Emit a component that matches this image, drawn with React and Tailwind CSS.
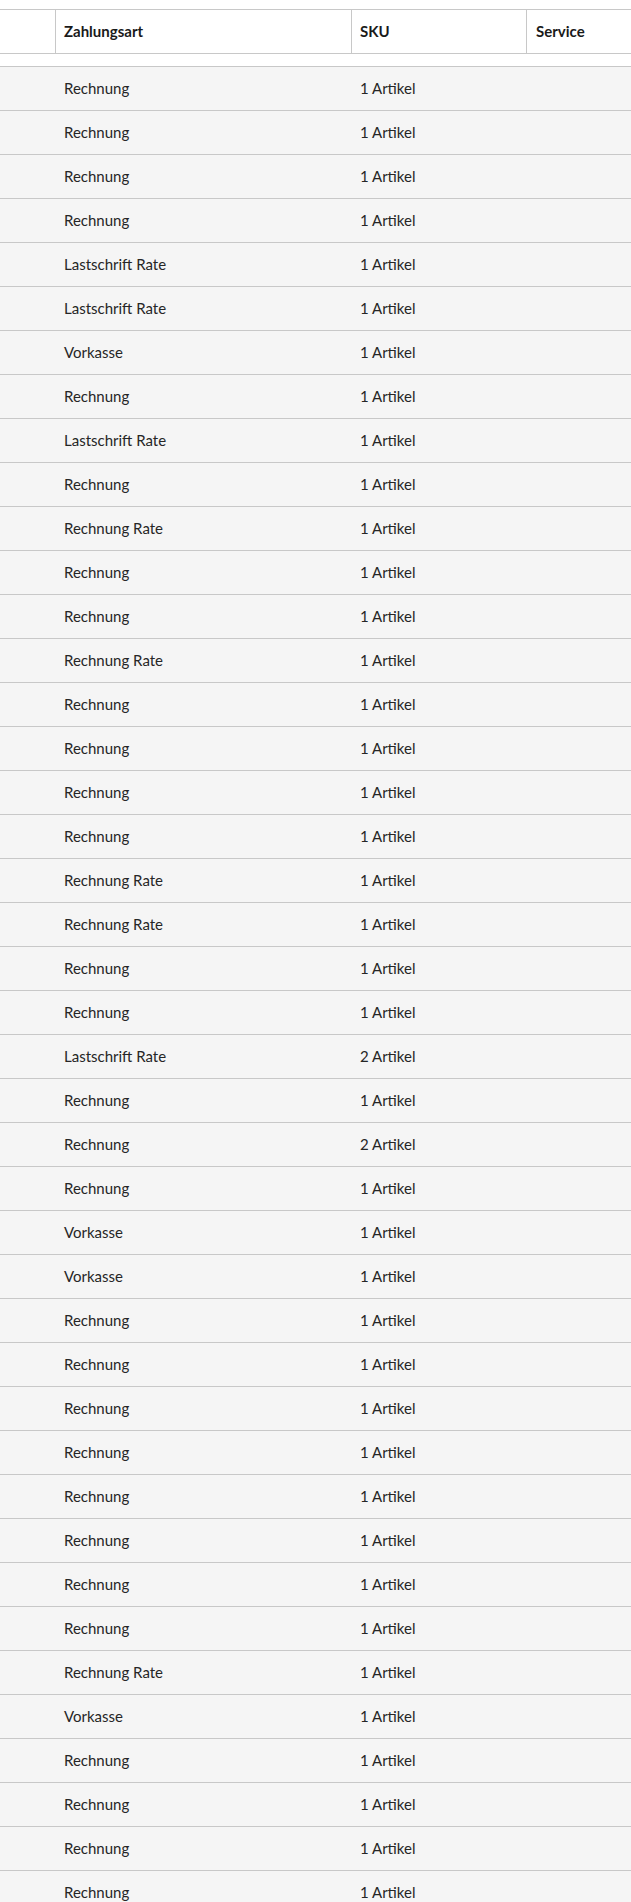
import React from 'react';

const rows = [
  ['Rechnung', '1 Artikel'],
  ['Rechnung', '1 Artikel'],
  ['Rechnung', '1 Artikel'],
  ['Rechnung', '1 Artikel'],
  ['Lastschrift Rate', '1 Artikel'],
  ['Lastschrift Rate', '1 Artikel'],
  ['Vorkasse', '1 Artikel'],
  ['Rechnung', '1 Artikel'],
  ['Lastschrift Rate', '1 Artikel'],
  ['Rechnung', '1 Artikel'],
  ['Rechnung Rate', '1 Artikel'],
  ['Rechnung', '1 Artikel'],
  ['Rechnung', '1 Artikel'],
  ['Rechnung Rate', '1 Artikel'],
  ['Rechnung', '1 Artikel'],
  ['Rechnung', '1 Artikel'],
  ['Rechnung', '1 Artikel'],
  ['Rechnung', '1 Artikel'],
  ['Rechnung Rate', '1 Artikel'],
  ['Rechnung Rate', '1 Artikel'],
  ['Rechnung', '1 Artikel'],
  ['Rechnung', '1 Artikel'],
  ['Lastschrift Rate', '2 Artikel'],
  ['Rechnung', '1 Artikel'],
  ['Rechnung', '2 Artikel'],
  ['Rechnung', '1 Artikel'],
  ['Vorkasse', '1 Artikel'],
  ['Vorkasse', '1 Artikel'],
  ['Rechnung', '1 Artikel'],
  ['Rechnung', '1 Artikel'],
  ['Rechnung', '1 Artikel'],
  ['Rechnung', '1 Artikel'],
  ['Rechnung', '1 Artikel'],
  ['Rechnung', '1 Artikel'],
  ['Rechnung', '1 Artikel'],
  ['Rechnung', '1 Artikel'],
  ['Rechnung Rate', '1 Artikel'],
  ['Vorkasse', '1 Artikel'],
  ['Rechnung', '1 Artikel'],
  ['Rechnung', '1 Artikel'],
  ['Rechnung', '1 Artikel'],
  ['Rechnung', '1 Artikel'],
];

const cols = 'grid grid-cols-[55px_296px_175px_1fr]';

export default function App() {
  return (
    <div className="bg-white pt-[9px] text-[15px] text-[#262626] font-['Lato','Liberation_Sans',sans-serif] min-h-[1902px] overflow-hidden">
      {/* header */}
      <div className={`${cols} border-y border-[#c8c8c8] h-[45px] font-bold text-[#1a1a1a]`}>
        <div />
        <div className="border-l border-[#c8c8c8] pl-2 flex items-center">Zahlungsart</div>
        <div className="border-l border-[#c8c8c8] pl-2 flex items-center">SKU</div>
        <div className="border-l border-[#c8c8c8] pl-[9px] flex items-center">Service</div>
      </div>

      <div className="h-3" />

      {/* body */}
      <div className="bg-[#f5f5f5]">
        {rows.map((row, i) => (
          <div key={i} className={`${cols} border-t border-[#c8c8c8] h-[44px] items-center`}>
            <div />
            <div className="pl-[9px]">{row[0]}</div>
            <div className="pl-[9px]">{row[1]}</div>
            <div />
          </div>
        ))}
      </div>
    </div>
  );
}
